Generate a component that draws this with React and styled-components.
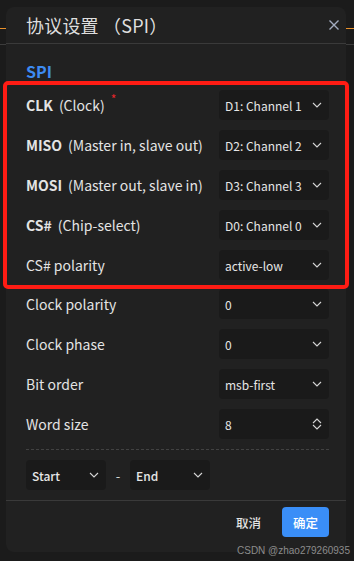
import React from "react";
import styled, { createGlobalStyle } from "styled-components";

const GlobalStyle = createGlobalStyle`
  html, body {
    margin: 0;
    padding: 0;
    background: #1b1b1b;
  }
  body {
    font-family: "Noto Sans CJK SC", "Noto Sans", sans-serif;
    background:
      linear-gradient(#e8902a, #e8902a) 0 28px / 100% 1px no-repeat,
      linear-gradient(#3c3c3c, #3c3c3c) 0 44px / 100% 1px no-repeat,
      #1b1b1b;
    min-height: 561px;
  }
`;

const Page = styled.div`
  position: relative;
  width: 354px;
  height: 561px;
  padding: 7px 0 0 6px;
  box-sizing: border-box;
`;

const Dialog = styled.div`
  width: 340px;
  height: 545px;
  background: #212121;
  border-radius: 8px;
  display: flex;
  flex-direction: column;
  box-sizing: border-box;
`;

const Header = styled.div`
  height: 38px;
  display: flex;
  align-items: center;
  justify-content: space-between;
  padding: 0 7px 0 20px;
  border-bottom: 1px solid #3a3a3a;
  box-sizing: border-box;
`;

const Title = styled.div`
  font-size: 18px;
  color: #dedede;
  letter-spacing: 0.2px;
`;

const CloseButton = styled.div`
  width: 10px;
  height: 10px;
  display: flex;
`;

const Body = styled.div`
  padding: 17px 17px 10px 20px;
  display: flex;
  flex-direction: column;
  border-bottom: 1px solid #3a3a3a;
`;

const SectionTitle = styled.div`
  height: 20px;
  line-height: 20px;
  font-size: 16px;
  font-weight: 700;
  color: #3d8bf2;
`;

const Highlight = styled.div`
  margin: 0 -20px -5px -23px;
  padding: 0 16px 0 19px;
  border: 4px solid #ff1c14;
  border-radius: 5px;
  display: flex;
  flex-direction: column;
  position: relative;
  z-index: 1;
`;

const Row = styled.div`
  height: 40px;
  display: flex;
  align-items: center;
  justify-content: space-between;
`;

const Label = styled.div`
  font-size: 14px;
  color: #e4e4e4;
  display: flex;
  align-items: center;
  gap: 6px;
`;

const Strong = styled.span`
  font-weight: 700;
`;

const Required = styled.span`
  color: #e3262b;
  font-size: 12px;
  margin-left: 6px;
  position: relative;
  top: -7px;
`;

const Select = styled.div`
  width: ${(p) => p.$width || 110}px;
  height: 30px;
  background: #1a1a1a;
  border-radius: 4px;
  display: flex;
  align-items: center;
  justify-content: space-between;
  padding: 0 7px 0 6px;
  box-sizing: border-box;
  font-size: 12px;
  font-weight: ${(p) => (p.$bold ? 500 : 400)};
  color: #e6e6e6;
`;

const Dashed = styled.div`
  margin-top: 5px;
  border-top: 1px dashed #424242;
`;

const RangeRow = styled.div`
  margin-top: 10px;
  display: flex;
  align-items: center;
`;

const Dash = styled.span`
  width: 24px;
  text-align: center;
  font-size: 13px;
  color: #d8d8d8;
`;

const Footer = styled.div`
  display: flex;
  justify-content: flex-end;
  align-items: center;
  gap: 21px;
  padding: 6px 17px 15px;
`;

const Button = styled.div`
  height: 30px;
  padding: 0 ${(p) => (p.$primary ? 11 : 0)}px;
  border-radius: 4px;
  display: flex;
  align-items: center;
  font-size: 12.5px;
  font-weight: 500;
  color: ${(p) => (p.$primary ? "#ffffff" : "#e2e2e2")};
  background: ${(p) => (p.$primary ? "#3a8ef7" : "transparent")};
`;

const Watermark = styled.div`
  position: absolute;
  right: 4px;
  bottom: 5px;
  font-family: "Liberation Sans", Arial, sans-serif;
  font-size: 10px;
  color: #8c8c8c;
`;

const Chevron = () => (
  <svg width="10" height="6" viewBox="0 0 10 6" fill="none">
    <path d="M1 1l4 4 4-4" stroke="#d6d6d6" strokeWidth="1.1" />
  </svg>
);

const UpDown = () => (
  <svg width="10" height="12" viewBox="0 0 10 12" fill="none">
    <path d="M1 5l4-4 4 4M1 7l4 4 4-4" stroke="#d6d6d6" strokeWidth="1.1" />
  </svg>
);

const CloseIcon = () => (
  <svg width="10" height="10" viewBox="0 0 10 10">
    <path d="M0.5 0.5l9 9M9.5 0.5l-9 9" stroke="#a3acc0" strokeWidth="1.4" />
  </svg>
);

const pins = [
  { name: "CLK", desc: "(Clock)", value: "D1: Channel 1", required: true },
  { name: "MISO", desc: "(Master in, slave out)", value: "D2: Channel 2" },
  { name: "MOSI", desc: "(Master out, slave in)", value: "D3: Channel 3" },
  { name: "CS#", desc: "(Chip-select)", value: "D0: Channel 0" },
];

const options = [
  { label: "Clock polarity", value: "0" },
  { label: "Clock phase", value: "0" },
  { label: "Bit order", value: "msb-first" },
  { label: "Word size", value: "8", spin: true },
];

export default function App() {
  return (
    <>
      <GlobalStyle />
      <Page>
        <Dialog>
          <Header>
            <Title>协议设置 （SPI）</Title>
            <CloseButton>
              <CloseIcon />
            </CloseButton>
          </Header>
          <Body>
            <SectionTitle>SPI</SectionTitle>
            <Highlight>
              {pins.map((p) => (
                <Row key={p.name}>
                  <Label>
                    <Strong>{p.name}</Strong>
                    <span>
                      {p.desc}
                      {p.required && <Required>*</Required>}
                    </span>
                  </Label>
                  <Select>
                    {p.value}
                    <Chevron />
                  </Select>
                </Row>
              ))}
              <Row>
                <Label>CS# polarity</Label>
                <Select>
                  active-low
                  <Chevron />
                </Select>
              </Row>
            </Highlight>
            {options.map((o) => (
              <Row key={o.label}>
                <Label>{o.label}</Label>
                <Select>
                  {o.value}
                  {o.spin ? <UpDown /> : <Chevron />}
                </Select>
              </Row>
            ))}
            <Dashed />
            <RangeRow>
              <Select $width={80} $bold>
                Start
                <Chevron />
              </Select>
              <Dash>-</Dash>
              <Select $width={80} $bold>
                End
                <Chevron />
              </Select>
            </RangeRow>
          </Body>
          <Footer>
            <Button>取消</Button>
            <Button $primary>确定</Button>
          </Footer>
        </Dialog>
        <Watermark>CSDN @zhao279260935</Watermark>
      </Page>
    </>
  );
}
